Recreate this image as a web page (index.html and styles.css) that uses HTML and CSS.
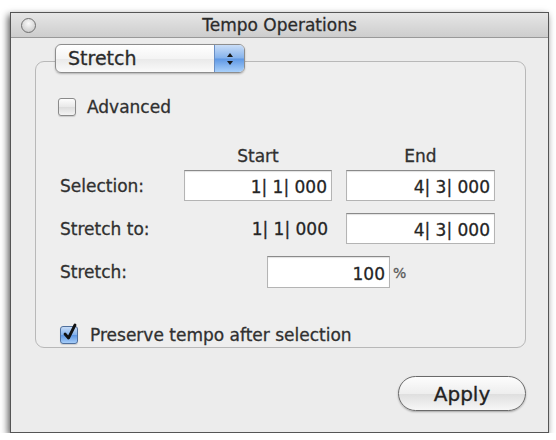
FILE: index.html
```html
<!DOCTYPE html>
<html>
<head>
<meta charset="utf-8">
<link rel="stylesheet" href="styles.css">
</head>
<body>
<div class="window">
  <div class="titlebar">
    <div class="tb-left"><span class="close"></span></div>
    <div class="title">Tempo Operations</div>
    <div class="tb-right"></div>
  </div>
  <div class="body">
    <div class="group">
      <div class="popup">
        <span class="popup-label">Stretch</span>
        <span class="popup-arrows">
          <svg width="10" height="16" viewBox="0 0 10 16"><path d="M5 2 L8 6 L2 6 Z M5 14 L8 10 L2 10 Z" fill="#1a1a1a"/></svg>
        </span>
      </div>
      <div class="check-row adv"><span class="checkbox"></span><span>Advanced</span></div>
      <div class="cols head"><span></span><span class="colhead">Start</span><span class="colhead">End</span></div>
      <div class="cols fields">
        <span class="lbl">Selection:</span><span class="field">1| 1| 000</span><span class="field">4| 3| 000</span>
        <span class="lbl">Stretch to:</span><span class="value">1| 1| 000</span><span class="field">4| 3| 000</span>
      </div>
      <div class="stretch-row"><span class="lbl wide">Stretch:</span><span class="field pct">100</span><span class="unit">%</span></div>
      <div class="check-row pres">
        <span class="checkbox on"><svg width="20" height="22" viewBox="0 0 20 22"><path d="M5 12 L8.5 16 L15 3" fill="none" stroke="#111" stroke-width="2.8" stroke-linecap="round" stroke-linejoin="round"/></svg></span>
        <span>Preserve tempo after selection</span>
      </div>
    </div>
    <div class="actions"><button class="btn">Apply</button></div>
  </div>
</div>
</body>
</html>
```
FILE: styles.css
```css
html, body {
  margin: 0;
  padding: 0;
  background: #ffffff;
}
body {
  font-family: "DejaVu Sans", "Liberation Sans", sans-serif;
  font-size: 17px;
  color: #303030;
  -webkit-text-stroke: 0.3px #303030;
}
.window {
  margin: 12px 0 0 10px;
  width: 537px;
  height: 419px;
  border: 1px solid #555;
  background: #ececec;
  box-shadow: -2px 3px 7px rgba(0, 0, 0, 0.65);
  display: flex;
  flex-direction: column;
}
.titlebar {
  height: 24px;
  border-bottom: 1px solid #999;
  background: linear-gradient(#e6e6e6, #cdcdcd);
  display: grid;
  grid-template-columns: 1fr auto 1fr;
  align-items: center;
}
.tb-left {
  display: flex;
  align-items: center;
}
.close {
  margin-left: 10px;
  width: 13px;
  height: 13px;
  border-radius: 50%;
  border: 1px solid #707070;
  background: radial-gradient(circle at 50% 35%, #fafafa, #d2d2d2 70%, #b5b5b5);
}
.title {
  font-size: 17px;
  line-height: 20px;
  color: #2a2a2a;
}
.body {
  flex: 1;
  display: flex;
  flex-direction: column;
  padding: 23px 22px 0 24px;
}
.group {
  border: 1px solid #b8b8b8;
  border-radius: 9px;
  background: #eeeeee;
  display: flex;
  flex-direction: column;
  padding: 0 20px 2px 24px;
}
.popup {
  margin-top: -18px;
  margin-left: -5px;
  align-self: flex-start;
  width: 190px;
  height: 29px;
  box-sizing: border-box;
  border: 1px solid #8d8d8d;
  border-radius: 6px;
  background: linear-gradient(#ffffff, #f4f4f4 50%, #e9e9e9 51%, #fafafa);
  box-shadow: 0 1px 2px rgba(0, 0, 0, 0.25);
  display: flex;
  overflow: hidden;
}
.popup-label {
  flex: 1;
  padding-left: 12px;
  font-size: 19px;
  line-height: 27px;
  color: #2a2a2a;
}
.popup-arrows {
  width: 29px;
  background: linear-gradient(#c9ddf7, #86b3ec 48%, #5f98e4 52%, #a9d0fa);
  border-left: 1px solid #6a8fc4;
  display: flex;
  align-items: center;
  justify-content: center;
}
.check-row {
  display: flex;
  align-items: center;
  line-height: 20px;
}
.adv {
  margin-top: 24px;
  margin-left: -2px;
  gap: 11px;
}
.checkbox {
  width: 18px;
  height: 18px;
  box-sizing: border-box;
  border: 1px solid #8a8a8a;
  border-radius: 3px;
  background: linear-gradient(#fdfdfd, #e8e8e8 50%, #dcdcdc 51%, #f4f4f4);
  box-shadow: 0 1px 1px rgba(0, 0, 0, 0.15);
  position: relative;
}
.checkbox.on {
  border-color: #4f6f9c;
  background: linear-gradient(#c5dbf6, #84b1ea 48%, #5c95e2 52%, #a6cdf8);
}
.checkbox.on svg {
  position: absolute;
  left: -1px;
  top: -5px;
}
.cols {
  display: grid;
  grid-template-columns: 110px 148px 149px;
  column-gap: 14px;
}
.head {
  margin-top: 29px;
  line-height: 20px;
}
.colhead {
  text-align: center;
}
.fields {
  margin-top: 4px;
  grid-auto-rows: 31px;
  row-gap: 12px;
  align-items: center;
}
.lbl {
  line-height: 20px;
}
.field {
  height: 31px;
  box-sizing: border-box;
  border: 1px solid #b4b4b4;
  border-top-color: #8a8a8a;
  background: #fff;
  box-shadow: inset 0 1px 1px rgba(0, 0, 0, 0.12);
  display: flex;
  align-items: center;
  justify-content: flex-end;
  padding: 3px 4px 0 0;
  color: #222;
}
.value {
  text-align: right;
  padding-right: 4px;
  line-height: 20px;
  color: #222;
}
.stretch-row {
  margin-top: 12px;
  display: flex;
  align-items: center;
}
.lbl.wide {
  width: 207px;
}
.field.pct {
  width: 123px;
  height: 32px;
}
.unit {
  margin-left: 3px;
  font-size: 14px;
  color: #5a5a5a;
  -webkit-text-stroke: 0.3px #5a5a5a;
  padding-top: 2px;
}
.pres {
  margin-top: 37px;
  gap: 12px;
}
.actions {
  margin-top: 28px;
  display: flex;
  justify-content: flex-end;
}
.btn {
  width: 128px;
  height: 35px;
  border: 1px solid #6a6a6a;
  border-radius: 18px;
  background: linear-gradient(#fdfdfd, #eeeeee 50%, #dedede 51%, #f7f7f7);
  box-shadow: 0 1px 2px rgba(0, 0, 0, 0.3);
  font-family: "DejaVu Sans", "Liberation Sans", sans-serif;
  font-size: 20px;
  color: #222;
  -webkit-text-stroke: 0.3px #222;
  padding: 0;
}
```
